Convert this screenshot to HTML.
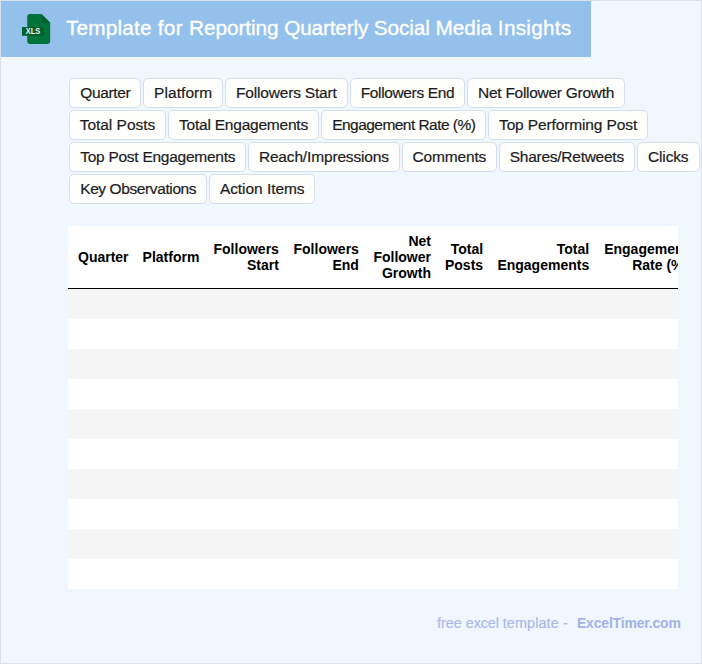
<!DOCTYPE html>
<html lang="en">
<head>
<meta charset="utf-8">
<title>Template for Reporting Quarterly Social Media Insights</title>
<style>
*{box-sizing:border-box;margin:0;padding:0}
html,body{width:702px;height:664px;overflow:hidden;background:#f0f7ff;}
body{position:relative;font-family:"Liberation Sans",sans-serif;color:#222;}
.frame{position:absolute;left:0;top:0;width:702px;height:664px;border:1px solid #d9e2eb;pointer-events:none;z-index:5}
.hdr{position:absolute;left:1px;top:1px;width:590px;height:56px;background:#93c1ec;}
.hdr h1{position:absolute;left:65px;top:14px;font-size:20.8px;line-height:26px;font-weight:400;color:#fff;white-space:nowrap;letter-spacing:0px;-webkit-text-stroke:0.35px #fff}
.ico{position:absolute;left:20px;top:12px;width:34px;height:34px}
.tags{position:absolute;left:0;top:0}
.tag{position:absolute;height:30px;border:1px solid #d5dfec;border-radius:5px;background:#fefefd;font-size:15.5px;line-height:27px;-webkit-text-stroke:0.2px #1c1c1c;text-align:center;white-space:nowrap;color:#1c1c1c;overflow:visible}
.tbl{position:absolute;left:68px;top:226px;width:610px;height:363px;background:#fff;overflow:hidden}
table{border-collapse:collapse;font-size:14px;line-height:16px;}
th{font-weight:700;padding:7px;text-align:right;vertical-align:middle;height:62px;border-bottom:1px solid #000;color:#000}
th.l{text-align:left}
th:first-child{padding-left:10px}
td{height:30px}
tbody tr:nth-child(odd) td{background:#f5f5f5}
.foot{position:absolute;left:437px;top:614px;font-size:14.4px;line-height:18px;color:#a9b9ea;white-space:nowrap;-webkit-text-stroke:0.15px #a9b9ea}
.foot b{color:#a3b3ea;-webkit-text-stroke:0;margin-left:6px;font-size:14px;letter-spacing:-0.19px}
</style>
</head>
<body>
<div class="hdr">
<svg class="ico" viewBox="0 0 34 34">
<path d="M9.2 1 H20.4 L29.2 9.8 V28 a3 3 0 0 1 -3 3 H9.2 a3 3 0 0 1 -3 -3 V4 a3 3 0 0 1 3 -3 z" fill="#00733b"/>
<path d="M20.4 1 L29.2 9.8 H20.4 z" fill="#005e30"/>
<rect x="1" y="14" width="21.8" height="8.8" fill="#00602f"/>
<text x="4.8" y="21.3" font-family="Liberation Sans, sans-serif" font-size="8.2" font-weight="700" fill="#f4f7f2" textLength="14.4" lengthAdjust="spacingAndGlyphs">XLS</text>
</svg>
<h1><span style="letter-spacing:0.172px">Template </span><span style="letter-spacing:0.309px">for </span><span style="letter-spacing:-0.083px">Reporting </span><span style="letter-spacing:-0.173px">Quarterly </span><span style="letter-spacing:-0.105px">Social </span><span style="letter-spacing:0.005px">Media </span><span style="letter-spacing:0.24px">Insights</span></h1>
</div>
<div class="tags">
<span class="tag" style="left:69.3px;top:78px;width:72.0px;letter-spacing:-0.343px">Quarter</span>
<span class="tag" style="left:143.2px;top:78px;width:80.0px;letter-spacing:0.059px">Platform</span>
<span class="tag" style="left:225.1px;top:78px;width:122.5px;letter-spacing:-0.181px">Followers Start</span>
<span class="tag" style="left:350.2px;top:78px;width:114.6px;letter-spacing:-0.356px">Followers End</span>
<span class="tag" style="left:466.7px;top:78px;width:158.8px;letter-spacing:-0.276px">Net Follower Growth</span>
<span class="tag" style="left:69.3px;top:110px;width:96.3px;letter-spacing:-0.025px">Total Posts</span>
<span class="tag" style="left:167.7px;top:110px;width:151.6px;letter-spacing:-0.216px">Total Engagements</span>
<span class="tag" style="left:321.3px;top:110px;width:164.9px;letter-spacing:-0.538px">Engagement Rate (%)</span>
<span class="tag" style="left:488.1px;top:110px;width:159.9px;letter-spacing:-0.124px">Top Performing Post</span>
<span class="tag" style="left:69.3px;top:142px;width:176.8px;letter-spacing:-0.263px">Top Post Engagements</span>
<span class="tag" style="left:248.0px;top:142px;width:151.7px;letter-spacing:-0.161px">Reach/Impressions</span>
<span class="tag" style="left:401.7px;top:142px;width:95.3px;letter-spacing:-0.178px">Comments</span>
<span class="tag" style="left:498.9px;top:142px;width:135.9px;letter-spacing:-0.263px">Shares/Retweets</span>
<span class="tag" style="left:636.7px;top:142px;width:63.1px;letter-spacing:-0.178px">Clicks</span>
<span class="tag" style="left:69.3px;top:174px;width:137.8px;letter-spacing:-0.395px">Key Observations</span>
<span class="tag" style="left:209.0px;top:174px;width:106.4px;letter-spacing:-0.057px">Action Items</span>
</div>
<div class="tbl">
<table>
<thead><tr>
<th class="l">Quarter</th><th class="l">Platform</th><th style="min-width:79.5px">Followers Start</th><th style="min-width:80.0px">Followers End</th><th style="min-width:72.1px">Net Follower Growth</th><th style="min-width:52.13px">Total Posts</th><th style="min-width:106.1px">Total Engagements</th><th style="min-width:99.0px">Engagement Rate (%)</th><th class="l">Top Performing Post</th><th>Top Post Engagements</th><th>Reach/Impressions</th><th>Comments</th><th>Shares/Retweets</th><th>Clicks</th><th class="l">Key Observations</th><th class="l">Action Items</th>
</tr></thead>
<tbody>
<tr><td colspan="16"></td></tr><tr><td colspan="16"></td></tr><tr><td colspan="16"></td></tr><tr><td colspan="16"></td></tr><tr><td colspan="16"></td></tr><tr><td colspan="16"></td></tr><tr><td colspan="16"></td></tr><tr><td colspan="16"></td></tr><tr><td colspan="16"></td></tr><tr><td colspan="16"></td></tr>
</tbody>
</table>
</div>
<div class="foot">free <span style="letter-spacing:-0.12px">excel </span><span style="letter-spacing:0.12px">template </span><span style="letter-spacing:-0.8px">-</span> <b>ExcelTimer.com</b></div>
<div class="frame"></div>
</body>
</html>
